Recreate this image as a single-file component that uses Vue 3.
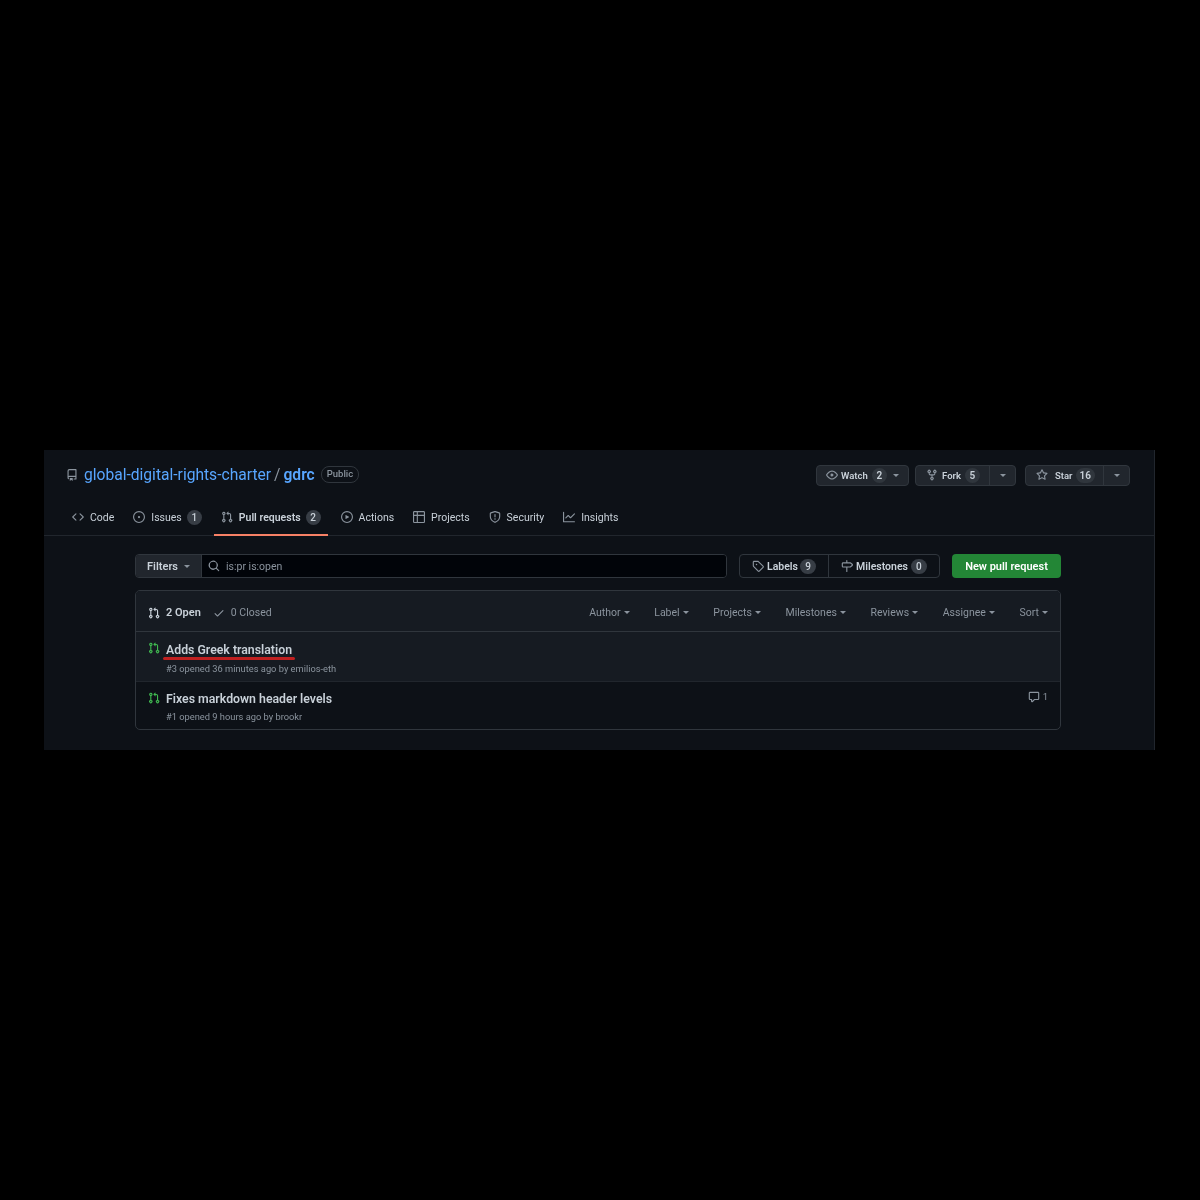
<script setup>
const d = {
  repo: 'M2 2.5A2.5 2.5 0 0 1 4.5 0h8.75a.75.75 0 0 1 .75.75v12.5a.75.75 0 0 1-.75.75h-2.5a.75.75 0 0 1 0-1.5h1.75v-2h-8a1 1 0 0 0-.714 1.7.75.75 0 1 1-1.072 1.05A2.495 2.495 0 0 1 2 11.5Zm10.5-1h-8a1 1 0 0 0-1 1v6.708A2.486 2.486 0 0 1 4.5 9h8ZM5 12.25a.25.25 0 0 1 .25-.25h3.5a.25.25 0 0 1 .25.25v3.25a.25.25 0 0 1-.4.2l-1.45-1.087a.249.249 0 0 0-.3 0L5.4 15.7a.25.25 0 0 1-.4-.2Z',
  code: 'm11.28 3.22 4.25 4.25a.75.75 0 0 1 0 1.06l-4.25 4.25a.749.749 0 0 1-1.275-.326.749.749 0 0 1 .215-.734L13.94 8l-3.72-3.72a.749.749 0 0 1 .326-1.275.749.749 0 0 1 .734.215Zm-6.56 0a.751.751 0 0 1 1.042.018.751.751 0 0 1 .018 1.042L2.06 8l3.72 3.72a.749.749 0 0 1-.326 1.275.749.749 0 0 1-.734-.215L.47 8.53a.75.75 0 0 1 0-1.06Z',
  issue: 'M8 9.5a1.5 1.5 0 1 0 0-3 1.5 1.5 0 0 0 0 3ZM8 0a8 8 0 1 1 0 16A8 8 0 0 1 8 0ZM1.5 8a6.5 6.5 0 1 0 13 0 6.5 6.5 0 0 0-13 0Z',
  pr: 'M1.5 3.25a2.25 2.25 0 1 1 3 2.122v5.256a2.251 2.251 0 1 1-1.5 0V5.372A2.25 2.25 0 0 1 1.5 3.25Zm5.677-.177L9.573.677A.25.25 0 0 1 10 .854V2.5h1A2.5 2.5 0 0 1 13.5 5v5.628a2.251 2.251 0 1 1-1.5 0V5a1 1 0 0 0-1-1h-1v1.646a.25.25 0 0 1-.427.177L7.177 3.427a.25.25 0 0 1 0-.354ZM3.75 2.5a.75.75 0 1 0 0 1.5.75.75 0 0 0 0-1.5Zm0 9.5a.75.75 0 1 0 0 1.5.75.75 0 0 0 0-1.5Zm8.25.75a.75.75 0 1 0 1.5 0 .75.75 0 0 0-1.5 0Z',
  play: 'M8 0a8 8 0 1 1 0 16A8 8 0 0 1 8 0ZM1.5 8a6.5 6.5 0 1 0 13 0 6.5 6.5 0 0 0-13 0Zm4.879-2.773 4.264 2.559a.25.25 0 0 1 0 .428l-4.264 2.559A.25.25 0 0 1 6 10.559V5.442a.25.25 0 0 1 .379-.215Z',
  table: 'M0 1.75C0 .784.784 0 1.75 0h12.5C15.216 0 16 .784 16 1.75v12.5A1.75 1.75 0 0 1 14.25 16H1.75A1.75 1.75 0 0 1 0 14.25ZM6.5 6.5v8h7.75a.25.25 0 0 0 .25-.25V6.5Zm8-1.5V1.75a.25.25 0 0 0-.25-.25H6.5V5Zm-13 1.5v7.75c0 .138.112.25.25.25H5v-8ZM5 5V1.5H1.75a.25.25 0 0 0-.25.25V5Z',
  shield: 'M7.467.133a1.748 1.748 0 0 1 1.066 0l5.25 1.68A1.75 1.75 0 0 1 15 3.48V7c0 1.566-.32 3.182-1.303 4.682-.983 1.498-2.585 2.813-5.032 3.855a1.697 1.697 0 0 1-1.33 0c-2.447-1.042-4.049-2.357-5.032-3.855C1.32 10.182 1 8.566 1 7V3.48a1.75 1.75 0 0 1 1.217-1.667Zm.61 1.429a.25.25 0 0 0-.153 0l-5.25 1.68a.25.25 0 0 0-.174.238V7c0 1.358.275 2.666 1.057 3.86.784 1.194 2.121 2.34 4.366 3.297a.196.196 0 0 0 .154 0c2.245-.956 3.582-2.104 4.366-3.298C13.225 9.666 13.5 8.36 13.5 7V3.48a.251.251 0 0 0-.174-.237l-5.25-1.68ZM8.75 4.75v3a.75.75 0 0 1-1.5 0v-3a.75.75 0 0 1 1.5 0ZM9 10.5a1 1 0 1 1-2 0 1 1 0 0 1 2 0Z',
  graph: 'M1.5 1.75V13.5h13.75a.75.75 0 0 1 0 1.5H.75a.75.75 0 0 1-.75-.75V1.75a.75.75 0 0 1 1.5 0Zm14.28 2.53-5.25 5.25a.75.75 0 0 1-1.06 0L7 7.06 4.28 9.78a.751.751 0 0 1-1.042-.018.751.751 0 0 1-.018-1.042l3.25-3.25a.75.75 0 0 1 1.06 0L10 7.94l4.72-4.72a.751.751 0 0 1 1.042.018.751.751 0 0 1 .018 1.042Z',
  eye: 'M8 2c1.981 0 3.671.992 4.933 2.078 1.27 1.091 2.187 2.345 2.637 3.023a1.62 1.62 0 0 1 0 1.798c-.45.678-1.367 1.932-2.637 3.023C11.67 13.008 9.981 14 8 14c-1.981 0-3.671-.992-4.933-2.078C1.797 10.83.88 9.576.43 8.898a1.62 1.62 0 0 1 0-1.798c.45-.677 1.367-1.931 2.637-3.022C4.33 2.992 6.019 2 8 2ZM1.679 7.932a.12.12 0 0 0 0 .136c.411.622 1.241 1.75 2.366 2.717C5.176 11.758 6.527 12.5 8 12.5c1.473 0 2.825-.742 3.955-1.715 1.124-.967 1.954-2.096 2.366-2.717a.12.12 0 0 0 0-.136c-.412-.621-1.242-1.75-2.366-2.717C10.824 4.242 9.473 3.5 8 3.5c-1.473 0-2.825.742-3.955 1.715-1.124.967-1.954 2.096-2.366 2.717ZM8 10a2 2 0 1 1-.001-3.999A2 2 0 0 1 8 10Z',
  fork: 'M5 5.372v.878c0 .414.336.75.75.75h4.5a.75.75 0 0 0 .75-.75v-.878a2.25 2.25 0 1 1 1.5 0v.878a2.25 2.25 0 0 1-2.25 2.25h-1.5v2.128a2.251 2.251 0 1 1-1.5 0V8.5h-1.5A2.25 2.25 0 0 1 3.5 6.25v-.878a2.25 2.25 0 1 1 1.5 0ZM5 3.25a.75.75 0 1 0-1.5 0 .75.75 0 0 0 1.5 0Zm6.75.75a.75.75 0 1 0 0-1.5.75.75 0 0 0 0 1.5Zm-3 8.75a.75.75 0 1 0-1.5 0 .75.75 0 0 0 1.5 0Z',
  star: 'M8 .25a.75.75 0 0 1 .673.418l1.882 3.815 4.21.612a.75.75 0 0 1 .416 1.279l-3.046 2.97.719 4.192a.751.751 0 0 1-1.088.791L8 12.347l-3.766 1.98a.75.75 0 0 1-1.088-.79l.72-4.194L.818 6.374a.75.75 0 0 1 .416-1.28l4.21-.611L7.327.668A.75.75 0 0 1 8 .25Zm0 2.445L6.615 5.5a.75.75 0 0 1-.564.41l-3.097.45 2.24 2.184a.75.75 0 0 1 .216.664l-.528 3.084 2.769-1.456a.75.75 0 0 1 .698 0l2.77 1.456-.53-3.084a.75.75 0 0 1 .216-.664l2.24-2.183-3.096-.45a.75.75 0 0 1-.564-.41L8 2.694Z',
  search: 'M10.68 11.74a6 6 0 0 1-7.922-8.982 6 6 0 0 1 8.982 7.922l3.04 3.04a.749.749 0 0 1-.326 1.275.749.749 0 0 1-.734-.215ZM11.5 7a4.499 4.499 0 1 0-8.997 0A4.499 4.499 0 0 0 11.5 7Z',
  tag: 'M1 7.775V2.75C1 1.784 1.784 1 2.75 1h5.025c.464 0 .91.184 1.238.513l6.25 6.25a1.75 1.75 0 0 1 0 2.474l-5.026 5.026a1.75 1.75 0 0 1-2.474 0l-6.25-6.25A1.752 1.752 0 0 1 1 7.775Zm1.5 0c0 .066.026.13.073.177l6.25 6.25a.25.25 0 0 0 .354 0l5.025-5.025a.25.25 0 0 0 0-.354l-6.25-6.25a.25.25 0 0 0-.177-.073H2.75a.25.25 0 0 0-.25.25ZM6 5a1 1 0 1 1 0 2 1 1 0 0 1 0-2Z',
  milestone: 'M7.75 0a.75.75 0 0 1 .75.75V3h3.634c.414 0 .814.147 1.13.414l2.07 1.75a1.75 1.75 0 0 1 0 2.672l-2.07 1.75a1.75 1.75 0 0 1-1.13.414H8.5v5.25a.75.75 0 0 1-1.5 0V10H2.75A1.75 1.75 0 0 1 1 8.25v-3.5C1 3.784 1.784 3 2.75 3H7V.75A.75.75 0 0 1 7.75 0Zm4.384 8.5a.25.25 0 0 0 .161-.06l2.07-1.75a.248.248 0 0 0 0-.38l-2.07-1.75a.25.25 0 0 0-.161-.06H2.75a.25.25 0 0 0-.25.25v3.5c0 .138.112.25.25.25h9.384Z',
  check: 'M13.78 4.22a.75.75 0 0 1 0 1.06l-7.25 7.25a.75.75 0 0 1-1.06 0L2.22 9.28a.751.751 0 0 1 .018-1.042.751.751 0 0 1 1.042-.018L6 10.94l6.72-6.72a.75.75 0 0 1 1.06 0Z',
  comment: 'M1 2.75C1 1.784 1.784 1 2.75 1h10.5c.966 0 1.75.784 1.75 1.75v7.5A1.75 1.75 0 0 1 13.25 12H9.06l-2.573 2.573A1.458 1.458 0 0 1 4 13.543V12H2.75A1.75 1.75 0 0 1 1 10.25Zm1.75-.25a.25.25 0 0 0-.25.25v7.5c0 .138.112.25.25.25h2a.75.75 0 0 1 .75.75v2.19l2.72-2.72a.749.749 0 0 1 .53-.22h4.5a.25.25 0 0 0 .25-.25v-7.5a.25.25 0 0 0-.25-.25Z'
}
const tabs = [
  { label: 'Code', icon: 'code' },
  { label: 'Issues', icon: 'issue', count: 1 },
  { label: 'Pull requests', icon: 'pr', count: 2, active: true },
  { label: 'Actions', icon: 'play' },
  { label: 'Projects', icon: 'table' },
  { label: 'Security', icon: 'shield' },
  { label: 'Insights', icon: 'graph' }
]
const sorts = ['Author', 'Label', 'Projects', 'Milestones', 'Reviews', 'Assignee', 'Sort']
</script>

<template>
  <div class="page">
    <div class="panel">
      <header class="head">
        <div class="title">
          <svg class="ic repo" viewBox="0 0 16 16"><path :d="d.repo" /></svg>
          <a class="owner">global-digital-rights-charter</a>
          <span class="slash">/</span>
          <a class="name">gdrc</a>
          <span class="public">Public</span>
        </div>
        <div class="actions">
          <div class="btn solo">
            <svg class="ic" viewBox="0 0 16 16"><path :d="d.eye" /></svg>
            <span>Watch</span><span class="cnt">2</span><i class="caret"></i>
          </div>
          <div class="btn split fork">
            <div class="main">
              <svg class="ic" viewBox="0 0 16 16"><path :d="d.fork" /></svg>
              <span>Fork</span><span class="cnt">5</span>
            </div>
            <div class="drop"><i class="caret"></i></div>
          </div>
          <div class="btn split star">
            <div class="main">
              <svg class="ic" viewBox="0 0 16 16"><path :d="d.star" /></svg>
              <span>Star</span><span class="cnt">16</span>
            </div>
            <div class="drop"><i class="caret"></i></div>
          </div>
        </div>
      </header>

      <nav class="tabs">
        <a v-for="t in tabs" :key="t.label" class="tab" :class="{ active: t.active }">
          <svg class="ic" viewBox="0 0 16 16"><path :d="d[t.icon]" /></svg>
          <span>{{ t.label }}</span>
          <span v-if="t.count" class="badge">{{ t.count }}</span>
        </a>
      </nav>

      <main class="main-col">
        <div class="toolbar">
          <div class="search">
            <div class="filters">Filters<i class="caret"></i></div>
            <div class="input">
              <svg class="ic" viewBox="0 0 16 16"><path :d="d.search" /></svg>
              <span>is:pr is:open</span>
            </div>
          </div>
          <div class="links">
            <a class="lnk labels">
              <svg class="ic" viewBox="0 0 16 16"><path :d="d.tag" /></svg>
              <span>Labels</span><span class="badge">9</span>
            </a>
            <a class="lnk miles">
              <svg class="ic" viewBox="0 0 16 16"><path :d="d.milestone" /></svg>
              <span>Milestones</span><span class="badge">0</span>
            </a>
          </div>
          <a class="new">New pull request</a>
        </div>

        <section class="box">
          <div class="box-head">
            <div class="states">
              <span class="state open">
                <svg class="ic" viewBox="0 0 16 16"><path :d="d.pr" /></svg>2 Open
              </span>
              <span class="state">
                <svg class="ic" viewBox="0 0 16 16"><path :d="d.check" /></svg>0 Closed
              </span>
            </div>
            <div class="sorts">
              <span v-for="s in sorts" :key="s" class="sort">{{ s }}<i class="caret"></i></span>
            </div>
          </div>

          <div class="row hl">
            <svg class="ic green" viewBox="0 0 16 16"><path :d="d.pr" /></svg>
            <div class="body">
              <a class="pr-title">Adds Greek translation<i class="scribble"></i></a>
              <div class="meta">#3 opened 36 minutes ago by emilios-eth</div>
            </div>
          </div>
          <div class="row second">
            <svg class="ic green" viewBox="0 0 16 16"><path :d="d.pr" /></svg>
            <div class="body">
              <a class="pr-title">Fixes markdown header levels</a>
              <div class="meta">#1 opened 9 hours ago by brookr</div>
            </div>
            <div class="comments">
              <svg class="ic" viewBox="0 0 16 16"><path :d="d.comment" /></svg>1
            </div>
          </div>
        </section>
      </main>
    </div>
  </div>
</template>

<style>
html, body { background: #000; margin: 0; }
</style>

<style scoped>
.page {
  height: 1200px;
  background: #000;
  padding-top: 450px;
  box-sizing: border-box;
  font-family: Roboto, "Noto Sans", sans-serif;
  font-size: 10.5px;
  color: #c9d1d9;
}
.panel {
  width: 1111px;
  height: 300px;
  margin-left: 44px;
  box-sizing: border-box;
  background: #0d1117;
  border-right: 1px solid #21262d;
  filter: blur(0.45px);
}
.ic { width: 12px; height: 12px; fill: #8b949e; flex: none; display: block; }
.caret {
  display: inline-block;
  width: 0; height: 0;
  border: 3.5px solid transparent;
  border-top-color: currentColor;
  border-bottom-width: 0;
  flex: none;
}

.head {
  height: 50px;
  padding: 14px 24px 0 22px;
  box-sizing: border-box;
  display: flex;
  justify-content: space-between;
  align-items: flex-start;
}
.title { display: flex; align-items: center; height: 21px; }
.title .repo { margin-right: 6px; }
.owner { color: #58a6ff; font-size: 15.6px; }
.slash { color: #8b949e; font-size: 15.6px; margin: 0 3px; }
.name { color: #58a6ff; font-size: 15.6px; font-weight: 600; }
.public {
  margin-left: 6px;
  height: 15px; line-height: 14px;
  padding: 0 5px;
  border: 1px solid #30363d;
  border-radius: 8px;
  font-size: 9.5px;
  font-weight: 500;
  color: #8b949e;
}
.actions { display: flex; align-items: center; height: 22px; }
.btn {
  height: 21px;
  box-sizing: border-box;
  background: #21262d;
  border: 1px solid #30363d;
  border-radius: 4px;
  display: flex;
  align-items: center;
  font-size: 9.5px;
  font-weight: 600;
  color: #c9d1d9;
}
.btn .caret { color: #8b949e; }
.solo { width: 93px; padding-left: 9px; margin-right: 6px; }
.solo span:first-of-type { margin-left: 3px; }
.solo .caret { margin-left: 6px; }
.cnt {
  margin-left: 4px;
  min-width: 15px;
  height: 15px;
  line-height: 15px;
  padding: 0 2px;
  box-sizing: border-box;
  text-align: center;
  background: #30363d;
  border-radius: 8px;
  font-size: 10px;
}
.star .cnt { padding: 0 4px; margin-left: 3px; }
.split { padding: 0; }
.split .main { display: flex; align-items: center; flex: 1; padding-left: 10px; height: 100%; }
.split .main span:first-of-type { margin-left: 4px; }
.star .main span:first-of-type { margin-left: 7px; }
.split .drop { width: 25px; height: 100%; border-left: 1px solid #30363d; display: flex; align-items: center; justify-content: center; }
.fork { width: 101px; margin-right: 9px; }
.star { width: 105px; }

.tabs {
  height: 36px;
  box-sizing: border-box;
  padding-left: 21px;
  border-bottom: 1px solid #21262d;
  display: flex;
  gap: 5px;
}
.tab {
  height: 36px;
  padding: 0 7px;
  display: flex;
  align-items: center;
  gap: 6px;
  box-sizing: border-box;
  font-size: 10.5px;
  color: #c9d1d9;
  border-bottom: 2px solid transparent;
}
.tab .badge { min-width: 15px; margin-left: -1px; }
.tab.active { font-weight: 600; border-bottom-color: #f78166; margin-right: 1px; }
.badge {
  min-width: 16px;
  height: 15px;
  line-height: 15px;
  text-align: center;
  background: #373d45;
  border-radius: 8px;
  font-size: 10px;
  font-weight: 500;
  color: #c9d1d9;
}

.main-col { padding: 18px 93px 0 91px; }
.toolbar { display: flex; gap: 12px; height: 24px; }
.search {
  flex: 1;
  display: flex;
  border: 1px solid #30363d;
  border-radius: 4px;
  box-sizing: border-box;
  overflow: hidden;
}
.filters {
  width: 66px;
  background: #21262d;
  border-right: 1px solid #30363d;
  box-sizing: border-box;
  display: flex;
  align-items: center;
  justify-content: center;
  gap: 6px;
  font-size: 11px;
  font-weight: 600;
  color: #c9d1d9;
}
.filters .caret { color: #8b949e; }
.input {
  flex: 1;
  background: #010409;
  display: flex;
  align-items: center;
  gap: 6px;
  padding-left: 6px;
  color: #8b949e;
  font-size: 10.5px;
}
.links {
  display: flex;
  width: 201px;
  border: 1px solid #30363d;
  border-radius: 4px;
  box-sizing: border-box;
}
.lnk { display: flex; align-items: center; gap: 3px; font-weight: 600; font-size: 10.5px; color: #c9d1d9; }
.labels { width: 89px; padding-left: 12px; box-sizing: border-box; border-right: 1px solid #30363d; }
.labels .badge { margin-left: -1px; }
.miles { flex: 1; padding-left: 12px; }
.new {
  width: 109px;
  background: #238636;
  border-radius: 4px;
  display: flex;
  align-items: center;
  justify-content: center;
  color: #fff;
  font-weight: 600;
  font-size: 11px;
}

.box {
  margin-top: 12px;
  height: 140px;
  box-sizing: border-box;
  border: 1px solid #30363d;
  border-radius: 5px;
  overflow: hidden;
}
.box-head {
  height: 41px;
  background: #161b22;
  border-bottom: 1px solid #30363d;
  box-sizing: border-box;
  display: flex;
  align-items: center;
  justify-content: space-between;
  padding: 3px 12px 0 12px;
}
.states { display: flex; gap: 12px; }
.state { display: flex; align-items: center; gap: 6px; color: #8b949e; font-size: 10.5px; }
.state.open { color: #c9d1d9; font-weight: 600; font-size: 11px; }
.state.open .ic { fill: #c9d1d9; }
.sorts { display: flex; gap: 24.7px; }
.sort { display: flex; align-items: center; gap: 3px; color: #8b949e; font-size: 10.5px; }

.row {
  position: relative;
  height: 49px;
  box-sizing: border-box;
  display: flex;
  padding: 10px 12px 0 12px;
  gap: 6px;
}
.row.hl { background: #161b22; height: 50px; padding-top: 11px; border-bottom: 1px solid #21262d; }
.row.hl .green { margin-top: -1px; }
.row.hl .meta { margin-top: 4px; }
.row.second .meta { margin-top: 3px; }
.green { fill: #3fb950; }
.body { flex: 1; display: flex; flex-direction: column; }
.pr-title {
  position: relative;
  align-self: flex-start;
  font-size: 12.3px;
  line-height: 15px;
  font-weight: 600;
  color: #c9d1d9;
}
.scribble {
  position: absolute;
  left: -3px; right: -3px;
  bottom: -2px;
  height: 3px;
  border-radius: 2px;
  background: #c02020;
}
.meta { font-size: 9.3px; line-height: 13px; color: #8b949e; }
.comments { display: flex; align-items: flex-start; gap: 3px; margin-top: -1px; font-size: 9.5px; line-height: 12px; color: #8b949e; }
</style>
